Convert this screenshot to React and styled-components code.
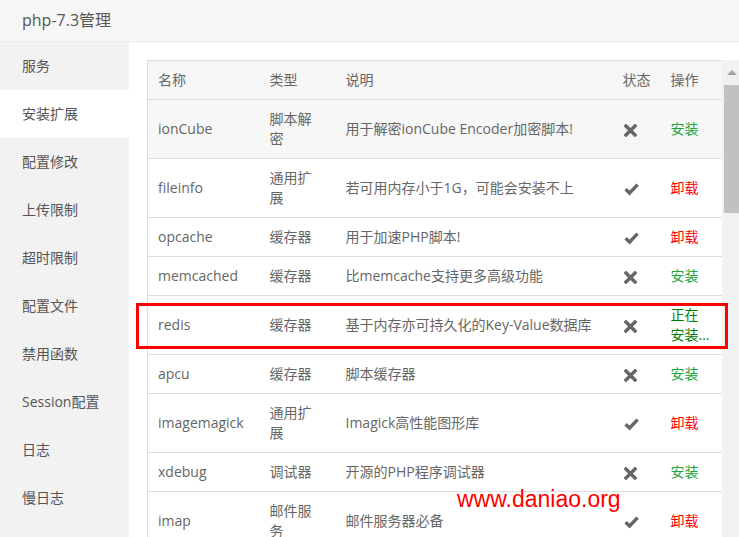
import styled, { createGlobalStyle } from 'styled-components'

const GlobalStyle = createGlobalStyle`
  html, body {
    margin: 0;
    padding: 0;
    background: #fff;
  }
  body {
    font-family: "Open Sans", "Noto Sans CJK SC", sans-serif;
    color: #666;
  }
`

const Page = styled.div`
  position: relative;
  width: 739px;
  height: 537px;
  overflow: hidden;
  display: flex;
  flex-direction: column;
`

const TopBar = styled.header`
  height: 41px;
  line-height: 41px;
  flex-shrink: 0;
  padding-left: 22px;
  background: #f6f6f6;
  border-bottom: 1px solid #ebebeb;
  font-size: 16px;
  color: #555;
`

const Main = styled.div`
  display: flex;
  flex: 1;
  min-height: 0;
`

const Sidebar = styled.nav`
  width: 129px;
  flex-shrink: 0;
  background: #f2f2f2;
`

const NavItem = styled.div`
  height: 48px;
  line-height: 48px;
  padding-left: 22px;
  font-size: 14px;
  color: #555;
  background: ${(p) => (p.$active ? '#fff' : 'transparent')};
`

const Content = styled.section`
  flex: 1;
  display: flex;
  padding: 18px 0 0 18px;
  min-width: 0;
`

const TableBox = styled.div`
  flex: 1;
  overflow: hidden;
`

const Table = styled.table`
  width: 575px;
  border-collapse: collapse;
  table-layout: fixed;
  border: 1px solid #ddd;
  font-size: 14px;
  line-height: 20px;

  th, td {
    text-align: left;
    padding: 9px 10px;
    vertical-align: middle;
    border-bottom: 1px solid #ddd;
  }
  th {
    font-weight: normal;
    color: #666;
    background: #f6f6f6;
  }
  td {
    color: #666;
  }
  td.type {
    padding-right: 14px;
  }
`

const Row = styled.tr`
  background: ${(p) => (p.$hover ? '#f7f7f7' : '#fff')};
`

const Status = styled.span`
  display: inline-flex;
  vertical-align: middle;
  color: #666;
  padding-left: 1px;
`

const Action = styled.span`
  color: ${(p) => p.$color};
`

const ScrollBar = styled.div`
  width: 17px;
  flex-shrink: 0;
  background: #f1f1f1;
  display: flex;
  flex-direction: column;
  align-items: stretch;
`

const ScrollArrow = styled.div`
  height: 25px;
  display: flex;
  align-items: center;
  justify-content: center;
  padding-left: 2px;
  &::before {
    content: '';
    border-left: 5px solid transparent;
    border-right: 5px solid transparent;
    border-bottom: 5px solid #a3a3a3;
  }
`

const ScrollThumb = styled.div`
  height: 128px;
  margin-left: 2px;
  background: #c1c1c1;
`

const Highlight = styled.div`
  position: absolute;
  left: 136px;
  top: 303px;
  width: 592px;
  height: 46px;
  box-sizing: border-box;
  border: 3px solid #f00;
  pointer-events: none;
`

const Watermark = styled.div`
  position: absolute;
  left: 457px;
  top: 488px;
  font-family: "Liberation Sans", Arial, sans-serif;
  font-size: 23px;
  line-height: 23px;
  color: #f00;
`

function CrossIcon() {
  return (
    <svg width="13" height="13" viewBox="0 0 13 13">
      <path d="M2 2 L11 11 M11 2 L2 11" stroke="#666" strokeWidth="3.4" strokeLinecap="square" fill="none" />
    </svg>
  )
}

function CheckIcon() {
  return (
    <svg width="15" height="14" viewBox="0 0 15 14">
      <path d="M1.6 7.2 L5.6 11 L13.6 2.6" stroke="#666" strokeWidth="3.4" strokeLinecap="butt" strokeLinejoin="miter" fill="none" />
    </svg>
  )
}

const menu = ['服务', '安装扩展', '配置修改', '上传限制', '超时限制', '配置文件', '禁用函数', 'Session配置', '日志', '慢日志']

const rows = [
  { name: 'ionCube', type: '脚本解密', desc: '用于解密ionCube Encoder加密脚本!', ok: false, act: 'install', hover: true },
  { name: 'fileinfo', type: '通用扩展', desc: '若可用内存小于1G，可能会安装不上', ok: true, act: 'remove' },
  { name: 'opcache', type: '缓存器', desc: '用于加速PHP脚本!', ok: true, act: 'remove' },
  { name: 'memcached', type: '缓存器', desc: '比memcache支持更多高级功能', ok: false, act: 'install' },
  { name: 'redis', type: '缓存器', desc: '基于内存亦可持久化的Key-Value数据库', ok: false, act: 'busy' },
  { name: 'apcu', type: '缓存器', desc: '脚本缓存器', ok: false, act: 'install' },
  { name: 'imagemagick', type: '通用扩展', desc: 'Imagick高性能图形库', ok: true, act: 'remove' },
  { name: 'xdebug', type: '调试器', desc: '开源的PHP程序调试器', ok: false, act: 'install' },
  { name: 'imap', type: '邮件服务', desc: '邮件服务器必备', ok: true, act: 'remove' },
]

const actions = {
  install: { text: '安装', color: '#20a53a' },
  remove: { text: '卸载', color: '#ff0000' },
  busy: { text: '正在安装...', color: '#008000' },
}

function App() {
  return (
    <Page>
      <GlobalStyle />
      <TopBar>php-7.3管理</TopBar>
      <Main>
        <Sidebar>
          {menu.map((m) => (
            <NavItem key={m} $active={m === '安装扩展'}>
              {m}
            </NavItem>
          ))}
        </Sidebar>
        <Content>
          <TableBox>
            <Table>
              <colgroup>
                <col style={{ width: 112 }} />
                <col style={{ width: 76 }} />
                <col style={{ width: 277 }} />
                <col style={{ width: 48 }} />
                <col style={{ width: 62 }} />
              </colgroup>
              <thead>
                <tr>
                  <th>名称</th>
                  <th>类型</th>
                  <th>说明</th>
                  <th>状态</th>
                  <th>操作</th>
                </tr>
              </thead>
              <tbody>
                {rows.map((r) => {
                  const a = actions[r.act]
                  return (
                    <Row key={r.name} $hover={r.hover}>
                      <td>{r.name}</td>
                      <td className="type">{r.type}</td>
                      <td>{r.desc}</td>
                      <td>
                        <Status>{r.ok ? <CheckIcon /> : <CrossIcon />}</Status>
                      </td>
                      <td>
                        <Action $color={a.color}>{a.text}</Action>
                      </td>
                    </Row>
                  )
                })}
              </tbody>
            </Table>
          </TableBox>
          <ScrollBar>
            <ScrollArrow />
            <ScrollThumb />
          </ScrollBar>
        </Content>
      </Main>
      <Highlight />
      <Watermark>www.daniao.org</Watermark>
    </Page>
  )
}

export default App
